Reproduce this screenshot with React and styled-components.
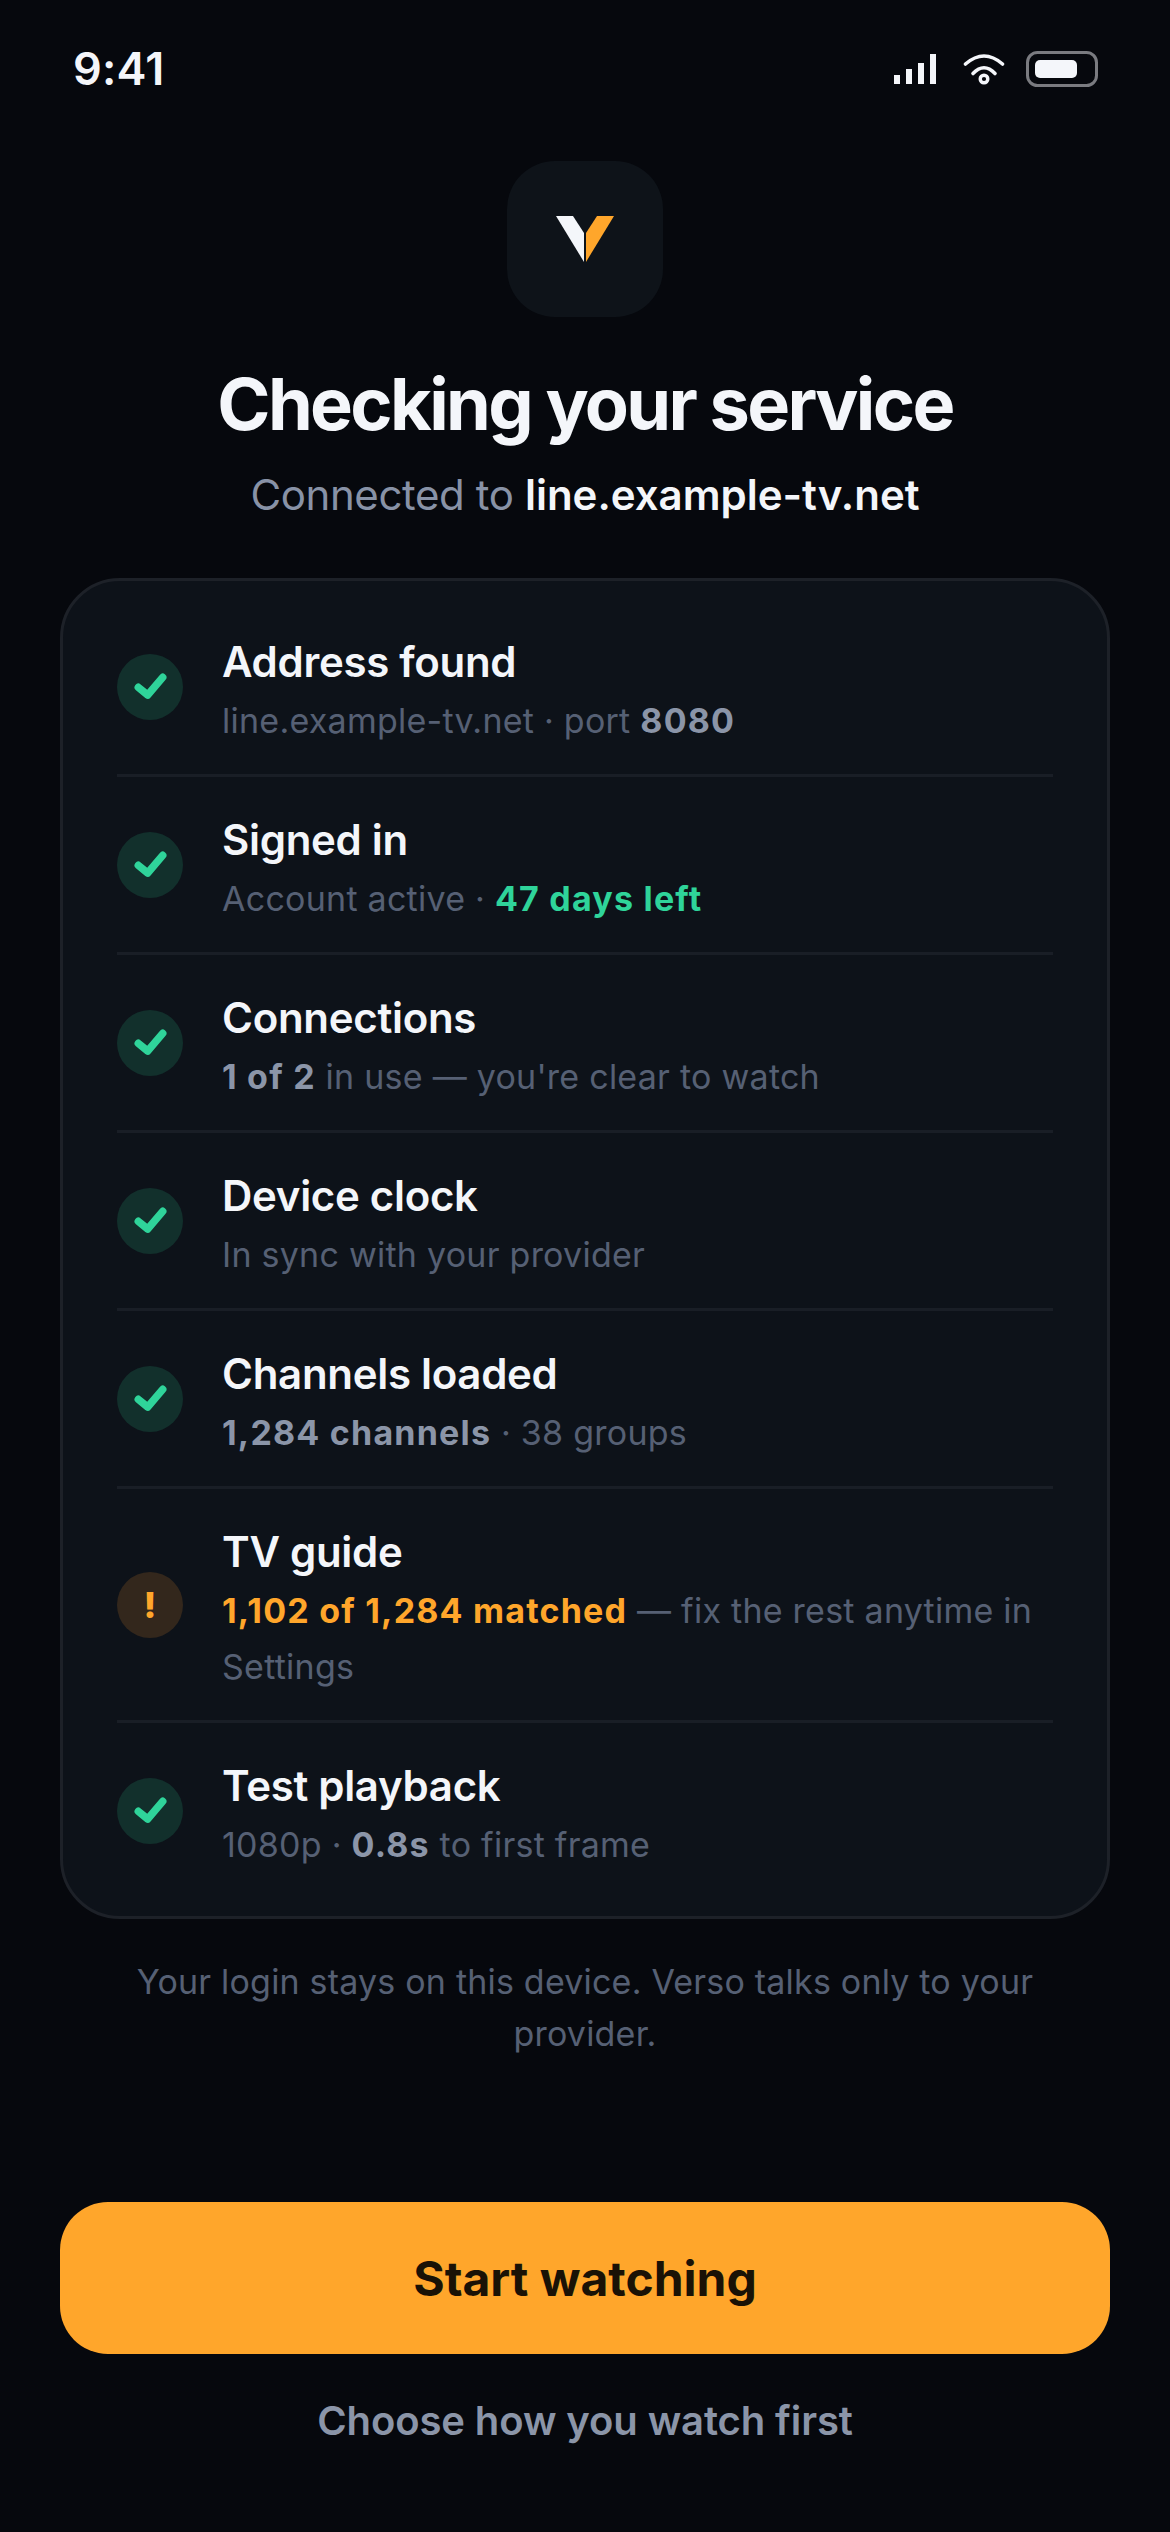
import React from "react";
import styled, { createGlobalStyle } from "styled-components";

const Global = createGlobalStyle`
  html, body { margin: 0; padding: 0; background: #06080d; }
  * { box-sizing: border-box; }
`;

const Page = styled.div`
  width: 1170px;
  height: 2532px;
  background: #06080d;
  font-family: Inter, "Noto Sans", sans-serif;
  display: flex;
  flex-direction: column;
  padding: 0 60px;
`;

const StatusBar = styled.div`
  height: 66px;
  margin-top: 36px;
  padding: 0 12px 0 13px;
  display: flex;
  align-items: center;
  justify-content: space-between;
`;

const Time = styled.div`
  font-size: 45px;
  font-weight: 600;
  letter-spacing: 0.2px;
  color: #f4f6fa;
  line-height: 66px;
`;

const StatusIcons = styled.div`
  display: flex;
  align-items: center;
`;

const WifiIcon = styled.svg`
  margin-left: 27px;
`;

const BatteryIcon = styled.svg`
  margin-left: 21px;
`;

const LogoTile = styled.div`
  width: 156px;
  height: 156px;
  border-radius: 48px;
  background: #0e1319;
  align-self: center;
  margin-top: 59px;
  display: flex;
  align-items: center;
  justify-content: center;
`;

const Title = styled.h1`
  margin: 44px 0 0;
  font-size: 72px;
  line-height: 86px;
  font-weight: 700;
  letter-spacing: -2.65px;
  color: #f4f6fa;
  text-align: center;
`;

const Subtitle = styled.p`
  margin: 18px 0 0;
  font-size: 42px;
  line-height: 60px;
  letter-spacing: -0.4px;
  color: #8892a6;
  text-align: center;
`;

const Host = styled.span`
  color: #f4f6fa;
  font-weight: 600;
  letter-spacing: 0;
`;

const Card = styled.div`
  margin-top: 53px;
  border: 3px solid #1d2128;
  border-radius: 60px;
  background: #0d1219;
  padding: 18px 54px 18px;
`;

const Row = styled.div`
  display: flex;
  align-items: center;
  gap: 39px;
  border-bottom: ${(p) => (p.$last ? "none" : "3px solid #191e26")};
`;

const Badge = styled.div`
  flex: none;
  width: 66px;
  height: 66px;
  border-radius: 50%;
  background: ${(p) => (p.$warn ? "#33271c" : "#12302c")};
  display: flex;
  align-items: center;
  justify-content: center;
`;

const Bang = styled.span`
  color: #ffa62b;
  font-size: 36px;
  font-weight: 800;
  line-height: 1;
`;

const RowText = styled.div`
  min-width: 0;
  padding: 36px 0 25px;
`;

const RowTitle = styled.div`
  font-size: 42px;
  line-height: 54px;
  font-weight: 600;
  letter-spacing: -0.3px;
  color: #f4f6fa;
`;

const RowSub = styled.div`
  margin-top: 4px;
  font-size: 34px;
  line-height: 56px;
  letter-spacing: 0.25px;
  color: #566074;
`;

const Strong = styled.b`
  font-weight: 700;
  letter-spacing: 1.2px;
  color: ${(p) => p.$color || "#8b95a8"};
`;

const Note = styled.p`
  margin: 37px 30px 0;
  font-size: 34px;
  line-height: 52px;
  letter-spacing: 0.2px;
  color: #566074;
  text-align: center;
`;

const Primary = styled.button`
  margin-top: auto;
  height: 152px;
  border: 0;
  border-radius: 48px;
  background: #ffa62b;
  color: #1a1206;
  font-family: inherit;
  font-size: 48px;
  font-weight: 700;
`;

const Secondary = styled.button`
  margin: 39px 0 85px;
  height: 54px;
  border: 0;
  background: none;
  color: #8b95a8;
  font-family: inherit;
  font-size: 40px;
  font-weight: 600;
  letter-spacing: -0.1px;
`;

const Check = () => (
  <svg width="36" height="30" viewBox="0 0 36 30" fill="none">
    <path d="M6.3 15.3 L15.7 23 L30.7 5.3" stroke="#2fd49a" strokeWidth="7.5" strokeLinecap="round" strokeLinejoin="round" />
  </svg>
);

const Signal = () => (
  <svg width="42" height="30" viewBox="0 0 42 30" fill="#f4f6fa">
    <rect x="0" y="21" width="6" height="9" />
    <rect x="12" y="15" width="6" height="15" />
    <rect x="24" y="9" width="6" height="21" />
    <rect x="36" y="0" width="6" height="30" />
  </svg>
);

const Wifi = () => (
  <WifiIcon width="42" height="31" viewBox="0 0 42 31" fill="none">
    <path d="M2.5 10 Q21 -6 39.5 10" stroke="#f4f6fa" strokeWidth="3.6" strokeLinecap="round" />
    <path d="M10 19.5 Q21 8 32 19.5" stroke="#f4f6fa" strokeWidth="3.6" strokeLinecap="round" />
    <circle cx="21" cy="25" r="3.8" stroke="#f4f6fa" strokeWidth="3.4" />
  </WifiIcon>
);

const Battery = () => (
  <BatteryIcon width="72" height="36" viewBox="0 0 72 36" fill="none">
    <rect x="1.5" y="1.5" width="69" height="33" rx="10" stroke="#7a7b80" strokeWidth="3" />
    <rect x="9" y="9" width="42" height="18" rx="5" fill="#f4f6fa" />
  </BatteryIcon>
);

const Logo = () => (
  <svg width="60" height="48" viewBox="0 0 60 48">
    <polygon points="1,1 18,1 29,18 29,47" fill="#f4f6fa" />
    <polygon points="31,18 42,1 59,1 31,47" fill="#ffa62b" />
  </svg>
);

const rows = [
  { title: "Address found", sub: <>line.example-tv.net · port <Strong>8080</Strong></> },
  { title: "Signed in", sub: <>Account active · <Strong $color="#2fd49a">47 days left</Strong></> },
  { title: "Connections", sub: <><Strong>1 of 2</Strong> in use — you're clear to watch</> },
  { title: "Device clock", sub: <>In sync with your provider</> },
  { title: "Channels loaded", sub: <><Strong>1,284 channels</Strong> · 38 groups</> },
  { title: "TV guide", warn: true, sub: <><Strong $color="#ffa62b">1,102 of 1,284 matched</Strong> — fix the rest anytime in Settings</> },
  { title: "Test playback", sub: <>1080p · <Strong>0.8s</Strong> to first frame</> },
];

export default function App() {
  return (
    <Page>
      <Global />
      <StatusBar>
        <Time>9:41</Time>
        <StatusIcons>
          <Signal />
          <Wifi />
          <Battery />
        </StatusIcons>
      </StatusBar>
      <LogoTile><Logo /></LogoTile>
      <Title>Checking your service</Title>
      <Subtitle>Connected to <Host>line.example-tv.net</Host></Subtitle>
      <Card>
        {rows.map((r, i) => (
          <Row key={r.title} $last={i === rows.length - 1}>
            <Badge $warn={r.warn}>{r.warn ? <Bang>!</Bang> : <Check />}</Badge>
            <RowText>
              <RowTitle>{r.title}</RowTitle>
              <RowSub>{r.sub}</RowSub>
            </RowText>
          </Row>
        ))}
      </Card>
      <Note>Your login stays on this device. Verso talks only to your provider.</Note>
      <Primary>Start watching</Primary>
      <Secondary>Choose how you watch first</Secondary>
    </Page>
  );
}
